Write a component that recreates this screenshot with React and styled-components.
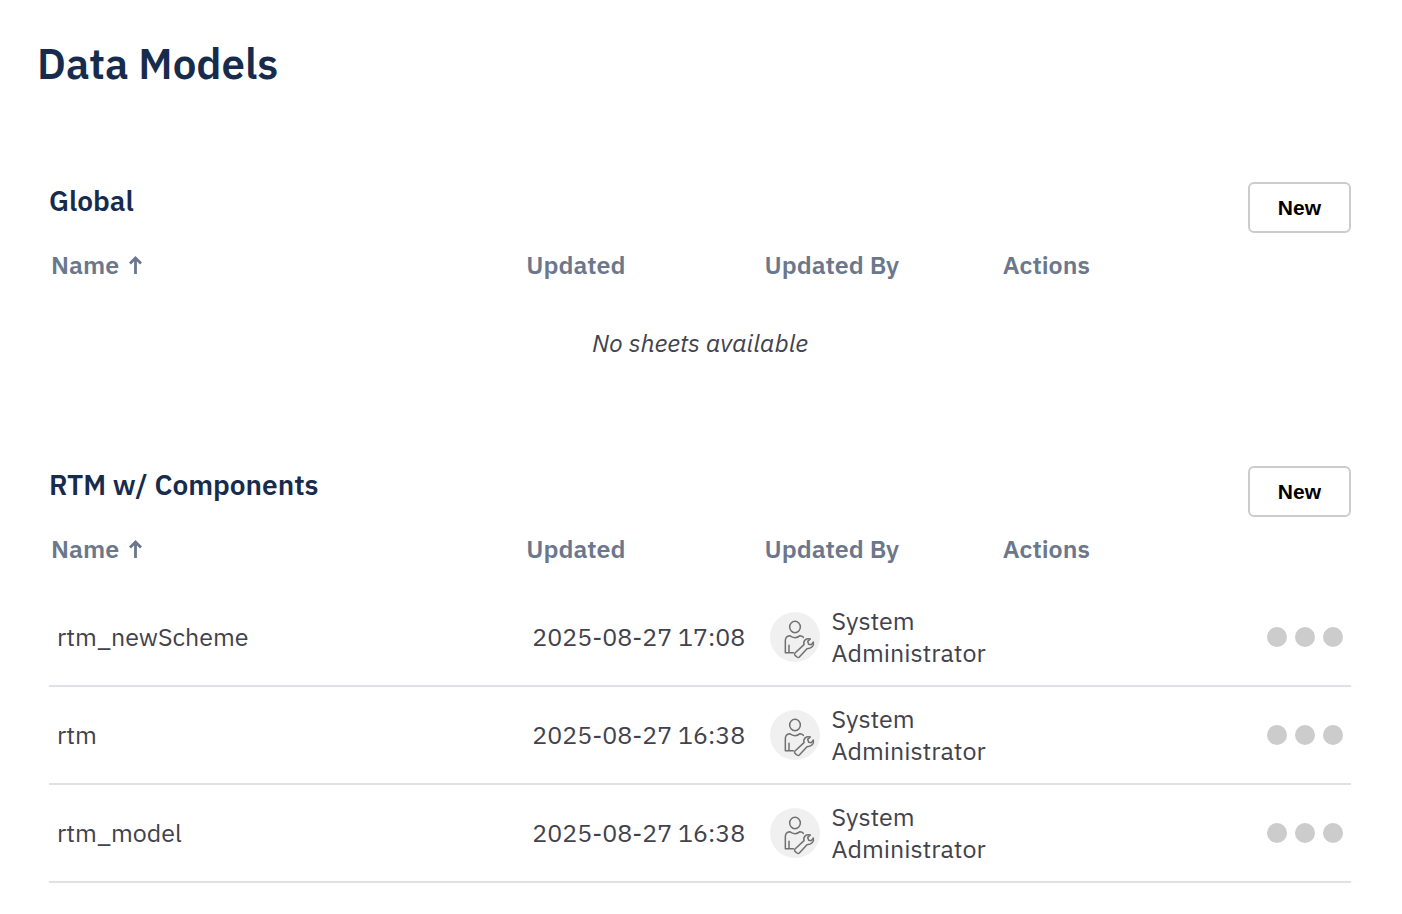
import React from "react";
import styled, { createGlobalStyle } from "styled-components";

const GlobalStyle = createGlobalStyle`
  *, *::before, *::after { box-sizing: border-box; }
  body {
    margin: 0;
    background: #fff;
    color: #42424c;
    font-family: "IBM Plex Sans", Roboto, "Noto Sans", sans-serif;
    font-size: 25px;
    line-height: 32px;
  }
`;

const Page = styled.main`
  padding: 36px 51px 24px 49px;
`;

const Title = styled.h1`
  margin: 0 0 90px -12px;
  color: #172b4d;
  font-size: 42px;
  line-height: 56px;
  font-weight: 600;
`;

const Section = styled.section`
  & + & {
    margin-top: 85px;
  }
`;

const SectionHeader = styled.header`
  display: flex;
  justify-content: space-between;
  align-items: flex-start;
`;

const SectionTitle = styled.h2`
  margin: 0;
  color: #172b4d;
  font-size: 28px;
  line-height: 38px;
  font-weight: 600;
`;

const NewButton = styled.button`
  height: 51px;
  padding: 0 28px;
  border: 2px solid #ccc;
  border-radius: 6px;
  background: #fff;
  color: #000;
  font: bold 21px "Liberation Sans", Arial, sans-serif;
  cursor: pointer;
`;

const Table = styled.table`
  width: 100%;
  table-layout: fixed;
  border-collapse: separate;
  border-spacing: 0;
`;

const HeadCell = styled.th`
  width: ${(p) => p.$width};
  padding: 16px 2px 24px;
  color: #6b778c;
  font-weight: 600;
  text-align: left;
`;

const SortButton = styled.button`
  display: flex;
  align-items: center;
  gap: 10px;
  padding: 0;
  border: 0;
  background: none;
  color: inherit;
  font: inherit;
  cursor: pointer;
`;

const Cell = styled.td`
  padding: 16px 8px;
  border-bottom: 2px solid #dfe1e6;
`;

const EmptyCell = styled.td`
  padding: 22px 0;
  text-align: center;
  font-style: italic;
`;

const User = styled.div`
  display: flex;
  align-items: center;
  gap: 11px;
`;

const AvatarSvg = styled.svg`
  flex: none;
  width: 50px;
  height: 50px;
`;

const MoreButton = styled.button`
  display: flex;
  gap: 8px;
  margin-left: auto;
  padding: 0;
  border: 0;
  background: none;
  cursor: pointer;
`;

const Dot = styled.span`
  width: 20px;
  height: 20px;
  border-radius: 50%;
  background: #ccc;
`;

const SortArrow = () => (
  <svg width="13" height="18" viewBox="0 0 13 18" fill="none" stroke="currentColor" strokeWidth="2.8" aria-hidden="true">
    <path d="M6.5 18V2M1 7.5 6.5 2 12 7.5" />
  </svg>
);

const Avatar = () => (
  <AvatarSvg viewBox="0 0 150 150" fill="none" stroke="#707070" strokeWidth="4.5" strokeLinecap="round" strokeLinejoin="round" aria-hidden="true">
    <circle cx="75" cy="75" r="75" fill="#f0f0f0" stroke="none" />
    <ellipse cx="75" cy="45" rx="16" ry="17" />
    <path d="M70 122H46V86C46 77 50 72 59 71Q67 77 75 77T90 71Q96 71 100 76M57 100V121" />
    <path d="M75 123 102 98C99 86 108 77 121 81L113 88 116 97 124 98 130 90C133 102 124 110 111 110L88 135Q85 138 81 135L75 130Q72 126 75 123Z" />
  </AvatarSvg>
);

const sections = [
  { title: "Global", rows: [] },
  {
    title: "RTM w/ Components",
    rows: [
      { name: "rtm_newScheme", updated: "2025-08-27 17:08", by: "System Administrator" },
      { name: "rtm", updated: "2025-08-27 16:38", by: "System Administrator" },
      { name: "rtm_model", updated: "2025-08-27 16:38", by: "System Administrator" },
    ],
  },
];

function ModelSection({ title, rows }) {
  return (
    <Section>
      <SectionHeader>
        <SectionTitle>{title}</SectionTitle>
        <NewButton type="button">New</NewButton>
      </SectionHeader>
      <Table>
        <thead>
          <tr>
            <HeadCell $width="36.5%" aria-sort="ascending">
              <SortButton type="button">
                Name
                <SortArrow />
              </SortButton>
            </HeadCell>
            <HeadCell $width="18.3%">Updated</HeadCell>
            <HeadCell $width="18.3%">Updated By</HeadCell>
            <HeadCell>Actions</HeadCell>
          </tr>
        </thead>
        <tbody>
          {rows.length === 0 && (
            <tr>
              <EmptyCell colSpan={4}>No sheets available</EmptyCell>
            </tr>
          )}
          {rows.map((row) => (
            <tr key={row.name}>
              <Cell>{row.name}</Cell>
              <Cell>{row.updated}</Cell>
              <Cell>
                <User>
                  <Avatar />
                  <span>{row.by}</span>
                </User>
              </Cell>
              <Cell>
                <MoreButton type="button" aria-label={`Actions for ${row.name}`}>
                  <Dot />
                  <Dot />
                  <Dot />
                </MoreButton>
              </Cell>
            </tr>
          ))}
        </tbody>
      </Table>
    </Section>
  );
}

export default function App() {
  return (
    <>
      <GlobalStyle />
      <Page>
        <Title>Data Models</Title>
        {sections.map((s) => (
          <ModelSection key={s.title} {...s} />
        ))}
      </Page>
    </>
  );
}
